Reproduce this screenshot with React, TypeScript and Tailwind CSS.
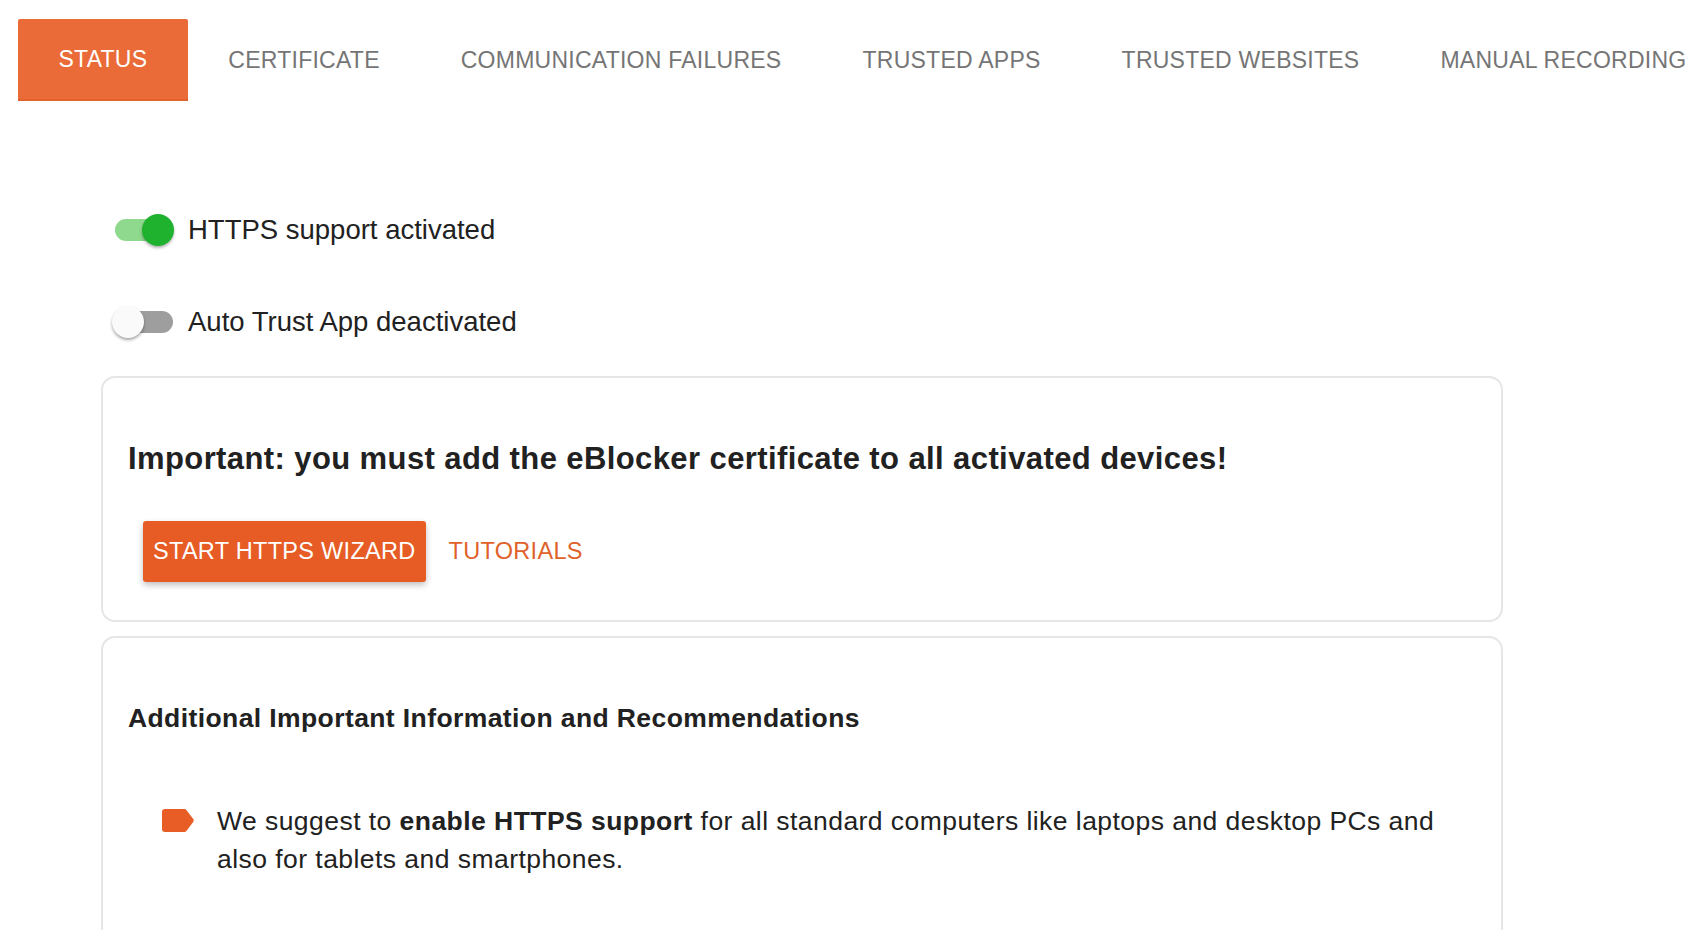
import React from "react";

const tabs = [
  "Status",
  "Certificate",
  "Communication Failures",
  "Trusted Apps",
  "Trusted Websites",
  "Manual Recording",
];

function Toggle({ on }: { on: boolean }) {
  return (
    <div className="relative w-[60px] h-[34px] flex items-center shrink-0">
      <div
        className={
          on
            ? "ml-[1px] w-[58px] h-[22px] rounded-full bg-[#8fd98f]"
            : "ml-[1px] w-[58px] h-[22px] rounded-full bg-[#9e9e9e]"
        }
      />
      <div
        className={
          on
            ? "absolute top-[1px] right-0 w-[32px] h-[32px] rounded-full bg-[#1fb22f] shadow-[0_2px_3px_rgba(0,0,0,0.3)]"
            : "absolute top-[1px] left-[-2px] w-[32px] h-[32px] rounded-full bg-[#fafafa] shadow-[0_2px_3px_rgba(0,0,0,0.35)]"
        }
      />
    </div>
  );
}

function Bullet() {
  return (
    <svg width="32" height="23" viewBox="0 0 32 23" className="shrink-0">
      <path
        d="M3 0 H22.5 Q23.5 0 24.2 0.8 L31.4 10.3 Q32 11.5 31.4 12.7 L24.2 22.2 Q23.5 23 22.5 23 H3 Q0 23 0 20 V3 Q0 0 3 0 Z"
        fill="#e85d25"
      />
    </svg>
  );
}

export default function App() {
  return (
    <div className="min-h-screen bg-white text-[#212121] font-['Liberation_Sans',Arial,sans-serif] overflow-hidden">
      <nav className="flex pl-[18px] pt-[19px] whitespace-nowrap">
        {tabs.map((t, i) => (
          <div
            key={t}
            className={
              i === 0
                ? "h-[82px] px-[40.5px] flex items-center uppercase text-[23px] tracking-[0.25px] text-white bg-[#ea6b37] rounded-t-[2px] border-b-2 border-[#e2622d] shrink-0"
                : "h-[82px] px-[40.5px] flex items-center uppercase text-[23px] tracking-[0.25px] text-[#757575] shrink-0"
            }
          >
            {t}
          </div>
        ))}
      </nav>

      <div className="ml-[101px] w-[1402px] pt-[104px]">
        <div className="flex flex-col gap-[42px] pl-[13px]">
          <div className="h-[50px] flex items-center gap-[14px]">
            <Toggle on />
            <span className="text-[27.5px] leading-none">HTTPS support activated</span>
          </div>
          <div className="h-[50px] flex items-center gap-[14px]">
            <Toggle on={false} />
            <span className="text-[27.5px] leading-none">Auto Trust App deactivated</span>
          </div>
        </div>

        <div className="mt-[29px] border-2 border-[#e6e6e6] rounded-[14px] pt-[62px] pb-[38px] px-[25px]">
          <h2 className="text-[31px] leading-[1.2] font-bold tracking-[0.4px] text-[#212121]">
            Important: you must add the eBlocker certificate to all activated devices!
          </h2>
          <div className="mt-[44px] flex items-center gap-[23px]">
            <button className="ml-[15px] h-[61px] px-[10px] bg-[#e65c24] text-white uppercase text-[23.5px] tracking-[0.3px] rounded-[3px] shadow-[0_3px_6px_rgba(0,0,0,0.25)]">
              Start HTTPS Wizard
            </button>
            <button className="uppercase text-[23.5px] tracking-[0.3px] text-[#e0622b]">Tutorials</button>
          </div>
        </div>

        <div className="mt-[14px] border-2 border-[#e6e6e6] rounded-[14px] pt-[65px] pb-[40px] px-[25px] h-[400px]">
          <h3 className="text-[26.5px] leading-[1.2] font-bold tracking-[0.4px] text-[#212121]">
            Additional Important Information and Recommendations
          </h3>
          <div className="mt-[67px] flex items-start gap-[23px] pl-[34px]">
            <div className="h-[38px] flex items-center">
              <Bullet />
            </div>
            <p className="text-[26.5px] leading-[38px] tracking-[0.45px] max-w-[1250px]">
              We suggest to <b>enable HTTPS support</b> for all standard computers like laptops and desktop PCs and also for tablets and smartphones.
            </p>
          </div>
        </div>
      </div>
    </div>
  );
}
